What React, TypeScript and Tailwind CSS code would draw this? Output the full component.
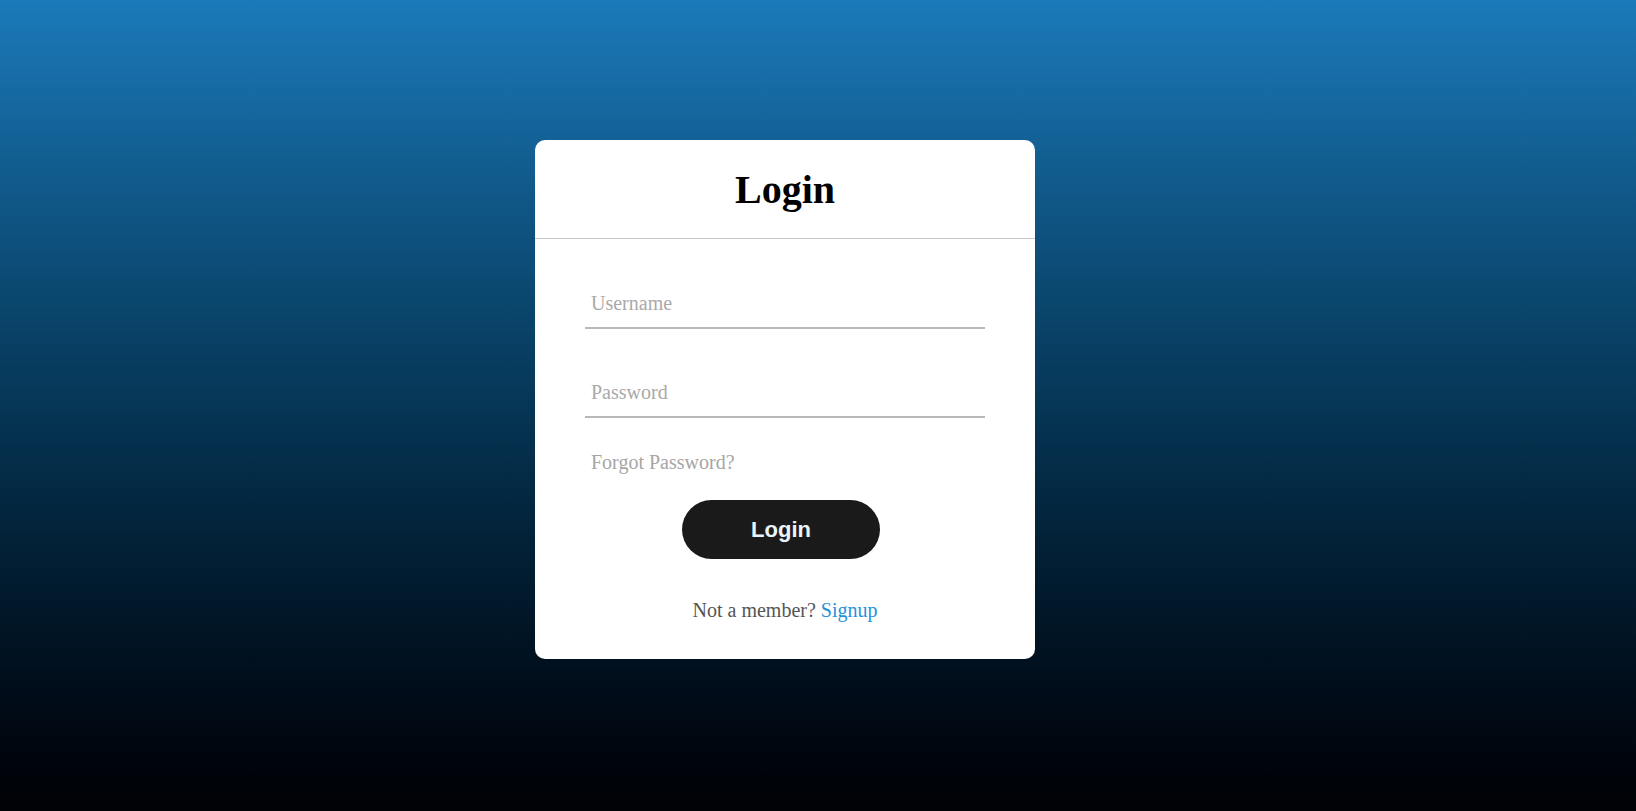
export default function App() {
  return (
    <div className="min-h-screen w-full bg-gradient-to-b from-[#1b7aba] to-[#000205] flex pl-[535px] pt-[140px] font-['Liberation_Serif',serif]">
      <div className="w-[500px] h-[519px] bg-white rounded-[10px] flex flex-col">
        <div className="h-[99px] flex items-center justify-center border-b border-[#c8c8c8] shrink-0">
          <h1 className="text-[40px] font-bold text-black leading-[46px] pt-[2px]">Login</h1>
        </div>
        <form className="px-[50px] pt-[40px] flex flex-col" onSubmit={(e) => e.preventDefault()}>
          <input
            type="text"
            placeholder="Username"
            className="w-full h-[50px] px-[6px] text-[20px] border-b-2 border-[#b8b8b8] outline-none bg-transparent placeholder:text-[#a9a9a9]"
          />
          <input
            type="password"
            placeholder="Password"
            className="w-full h-[50px] mt-[39px] px-[6px] text-[20px] border-b-2 border-[#b8b8b8] outline-none bg-transparent placeholder:text-[#a9a9a9]"
          />
          <div className="mt-[33px] px-[6px] text-[20px] leading-[23px] text-[#a6a6a6] cursor-pointer">
            Forgot Password?
          </div>
          <button
            type="submit"
            className="mt-[26px] ml-[97px] self-start w-[198px] h-[59px] rounded-full bg-[#1b1a1a] text-[#eaf4fb] text-[22px] font-bold font-['Liberation_Sans',sans-serif]"
          >
            Login
          </button>
          <div className="mt-[40px] text-center text-[20px] leading-[23px] text-[#555555]">
            Not a member? <a href="#" className="text-[#2691d9]">Signup</a>
          </div>
        </form>
      </div>
    </div>
  );
}
